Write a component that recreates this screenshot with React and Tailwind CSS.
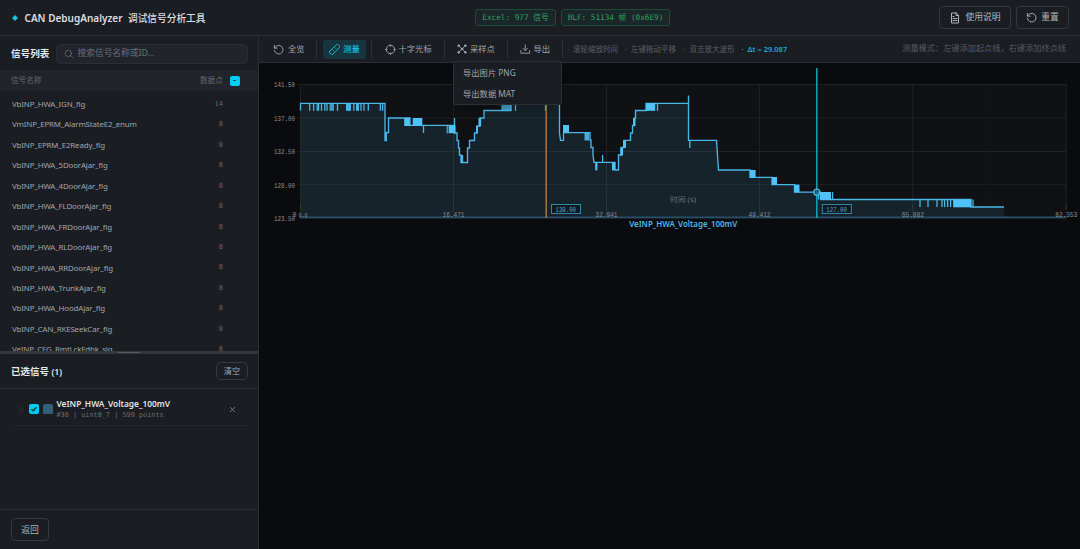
import React from "react";

const signals = [
  ["VbINP_HWA_IGN_flg", 14],
  ["VmINP_EPRM_AlarmStateE2_enum", 8],
  ["VbINP_EPRM_E2Ready_flg", 8],
  ["VbINP_HWA_5DoorAjar_flg", 8],
  ["VbINP_HWA_4DoorAjar_flg", 8],
  ["VbINP_HWA_FLDoorAjar_flg", 8],
  ["VbINP_HWA_FRDoorAjar_flg", 8],
  ["VbINP_HWA_RLDoorAjar_flg", 8],
  ["VbINP_HWA_RRDoorAjar_flg", 8],
  ["VbINP_HWA_TrunkAjar_flg", 8],
  ["VbINP_HWA_HoodAjar_flg", 8],
  ["VbINP_CAN_RKESeekCar_flg", 8],
  ["VeINP_CFG_RmtLckFdbk_sig", 8],
];

const TRACE =
  "M300.5 110.5V103.3H385V140.5H386.3V132.5H388.5V118H410V125.4H446.5V125.4H454.5V118V133H457V140.5H458.5V148H459.5V155H461V162.5H467.5V148H469.5V140.5H474.5V133H477V126H480V118H484V110.5H511V103.3H559.5V133L560.5 140.3H563.5V132.6H590V140H591V147.5H593V155L594 162.4H615V170H618.5V155H621V147.5H624V140.3H630.5V133H632.5V125.5H634.5V118H635.5V110.5H646V103.3H688.5V95.5V140.3H716.5L718.5 170H750V177.3H772V184.6H794.5V192.1H820.5V199.5H971V207H1004";

// dense toggling sections: x, y, width, height, opacity
const BLOCKS = [
  [329.5, 103, 4.5, 7.8, 0.75], [346, 103, 5, 7.8, 0.9], [356, 103, 3, 7.8, 0.9],
  [404.2, 118, 5.6, 8, 1], [412.7, 118, 9.6, 8, 1], [446.5, 126, 2, 7.5, 0.7], [449, 125.4, 6.5, 7.8, 1],
  [461, 155, 2.2, 8, 0.9], [478.5, 118, 2.6, 8, 1], [476, 126, 2, 7, 0.9],
  [501.3, 103, 9.7, 8, 0.75], [563, 125, 6, 7.8, 1], [584.5, 132.5, 4.5, 8, 0.85],
  [595.2, 162.4, 2.2, 8, 1], [612, 162.4, 3, 8, 1], [620.5, 147.5, 2.5, 8, 1], [623, 140.3, 3, 7.6, 1],
  [633, 118, 2.4, 7.6, 1], [646, 103, 9.2, 7.8, 1], [750, 170, 5.6, 7.8, 1],
  [772, 177, 5, 7.8, 1], [794.5, 184.6, 5, 7.8, 1], [820.5, 192, 10.5, 7.8, 1],
  [953.2, 199.5, 17.8, 7.8, 1],
];

// single toggles: x, y1, y2
const TICKS = [
  ...[309.7, 313.6, 317.2, 318.6, 321.5, 324.8, 327, 337.5, 353.8, 361, 364, 368.3, 380.3, 382.6].map((x) => [x, 103, 110.8]),
  [423.5, 125.4, 133], [515.5, 103, 110.8], [545.5, 103, 110.8],
  [602.6, 155, 162.4], [657.5, 103, 110.8], [689.8, 140, 148],
  [818.5, 192, 199.5], [832.6, 192, 199.5],
  ...[920, 928, 937, 942, 944.6, 947.6, 950.6, 973].map((x) => [x, 199.5, 207]),
];

const YL = [["141.50", 84.5], ["137.00", 118], ["132.50", 151.5], ["128.00", 184.7], ["123.50", 218]];
const XL = [["16.471", 453.5], ["32.941", 606.5], ["49.412", 759.5], ["65.882", 912.8], ["82.353", 1066.3]];

function Num({ x, y, w, children, fill = "#8d9095", size = 7.8 }) {
  return (
    <text x={x} y={y} fill={fill} fontSize={size} textLength={w} lengthAdjust="spacingAndGlyphs" fontFamily="'Liberation Mono', monospace">
      {children}
    </text>
  );
}

function Chart() {
  return (
    <svg className="block h-[486px] w-[821px]" viewBox="259 63 821 486">
      <rect x="300" y="84.5" width="766.5" height="133.5" fill="#101114" />
      {YL.map(([t, y]) => (
        <g key={t}>
          <line x1="298" x2="1066.5" y1={y} y2={y} stroke="#1e2125" />
          <Num x={274} y={y + 2.9} w={21}>{t}</Num>
        </g>
      ))}
      <line x1="300.5" x2="300.5" y1="84" y2="218" stroke="#1e2125" />
      <line x1="990.5" x2="990.5" y1="84" y2="218" stroke="#121417" />
      {XL.map(([t, x]) => (
        <line key={t} x1={x} x2={x} y1="84" y2="218" stroke="#1e2125" />
      ))}
      <path d={TRACE + "V218H300.5Z"} fill="#4fc3f7" fillOpacity="0.1" />
      <line x1="300" x2="1066" y1="217.4" y2="217.4" stroke="#29506a" strokeWidth="1.8" />
      {XL.map(([t, x]) => (
        <g key={t}>
          <line x1={x} x2={x} y1="205" y2="209" stroke="#34383e" />
          <Num x={x - 11} y={217.3} w={22}>{t}</Num>
        </g>
      ))}
      <line x1="300.5" x2="300.5" y1="205" y2="209" stroke="#34383e" />
      <Num x={292.5} y={217.3} w={4}>0</Num>
      <Num x={298.5} y={217} w={9} size={5}>0.0</Num>
      <path d={TRACE} fill="none" stroke="#4ab6e7" strokeWidth="1.35" />
      {BLOCKS.map(([x, y, w, h, o], i) => (
        <rect key={i} x={x} y={y} width={w} height={h} fill="#4fc3f7" opacity={o} />
      ))}
      {TICKS.map(([x, a, b], i) => (
        <line key={i} x1={x} x2={x} y1={a} y2={b} stroke="#4ab6e7" strokeWidth="1.3" />
      ))}
      <text x="670" y="202.2" fill="#6c7177" fontSize="7.4" textLength="26" lengthAdjust="spacingAndGlyphs" fontFamily="'Noto Sans', 'Noto Sans CJK SC', sans-serif">时间 (s)</text>
      <line x1="546.2" x2="546.2" y1="63" y2="218" stroke="#bd8044" strokeWidth="1.3" />
      <line x1="816.8" x2="816.8" y1="68" y2="218" stroke="#10adc2" strokeWidth="1.4" />
      <circle cx="816.8" cy="192.2" r="3" fill="#17394a" fillOpacity="0.5" stroke="#45bce2" strokeWidth="1.3" />
      <rect x="551.5" y="204.5" width="29" height="9" fill="#111a20" stroke="#3387a5" />
      <Num x={555.5} y={211.7} w={20.5} fill="#54a9c6">139.00</Num>
      <rect x="822.3" y="204.5" width="29" height="9" fill="#111a20" stroke="#3387a5" />
      <Num x={826.3} y={211.7} w={20.5} fill="#54a9c6">127.00</Num>
      <text x="629.2" y="227" fill="#4fb9e8" fontSize="8.2" fontWeight="600" textLength="108" lengthAdjust="spacingAndGlyphs" fontFamily="'Noto Sans', sans-serif">VeINP_HWA_Voltage_100mV</text>
    </svg>
  );
}

function Icon({ children, className = "size-[12px]" }) {
  return (
    <svg className={className + " shrink-0"} viewBox="0 0 24 24" fill="none" stroke="currentColor" strokeWidth="2" strokeLinecap="round" strokeLinejoin="round">
      {children}
    </svg>
  );
}

const Reset = () => (
  <Icon className="size-[11px]">
    <path d="M3 3v6h6" />
    <path d="M3.5 9A9.5 9.5 0 1 1 3 14" />
  </Icon>
);

const Sep = ({ className = "" }) => <div className={"h-[18px] w-px shrink-0 bg-[#2b3036] " + className} />;

export default function App() {
  return (
    <div className="flex h-[549px] w-[1080px] flex-col overflow-hidden bg-[#0a0b0f] font-['Noto_Sans','Noto_Sans_CJK_SC',sans-serif] text-[8.2px] leading-none whitespace-nowrap text-[#a0a5ad]">
      <header className="flex h-[36px] shrink-0 items-center border-b border-[#2a2e34] bg-[#1a1d22]">
        <div className="flex w-[475px] items-center pt-px pl-[12px]">
          <svg className="size-[6px]" viewBox="0 0 6 6"><path d="M3 0L6 3L3 6L0 3Z" fill="#16c5e4" /></svg>
          <h1 className="ml-[6.5px] text-[9.7px] font-semibold text-[#dcdee2]">
            <span className="inline-block w-[103.5px] text-[10px]">CAN DebugAnalyzer</span>
            <span className="font-medium">调试信号分析工具</span>
          </h1>
        </div>
        <div className="flex gap-[5px] font-['DejaVu_Sans_Mono','Noto_Sans_CJK_SC',monospace] text-[7.7px] text-[#2ca35b]">
          <div className="flex h-[17px] w-[81px] items-center justify-center rounded-[3px] border border-[#1d4b37] bg-[#1b262a]">Excel: 977 信号</div>
          <div className="flex h-[17px] w-[109px] items-center justify-center rounded-[3px] border border-[#1d4b37] bg-[#1b262a]">BLF: 51134 帧 (0x6E9)</div>
        </div>
        <div className="ml-auto flex gap-[5px] pr-[11px] text-[8.8px] text-[#b0b4ba]">
          <button className="flex h-[23px] w-[72px] items-center justify-center gap-[4px] rounded-[4px] border border-[#33373e]">
            <Icon><path d="M14 2H5v20h14V7z" /><path d="M14 2v5h5M8 9h2M8 13h8M8 17h8" /></Icon>使用说明
          </button>
          <button className="flex h-[23px] w-[53px] items-center justify-center gap-[4px] rounded-[4px] border border-[#33373e]">
            <Reset />重置
          </button>
        </div>
      </header>

      <div className="flex min-h-0 flex-1">
        <aside className="flex w-[259px] shrink-0 flex-col border-r border-[#2a2e34] bg-[#1a1d22]">
          <div className="flex h-[34px] shrink-0 items-center pt-px pl-[11px]">
            <h2 className="w-[45px] text-[9.6px] font-bold text-[#e8eaed]">信号列表</h2>
            <div className="flex h-[20px] w-[192px] items-center gap-[4px] rounded-[5px] border border-[#2a2e35] bg-[#21242b] pl-[7px] text-[8.8px] tracking-[-0.08px] text-[#6a6f79]">
              <Icon className="size-[9.5px]"><circle cx="11" cy="11" r="8" /><path d="M17 17l5 5" /></Icon>搜索信号名称或ID...
            </div>
          </div>
          <div className="flex h-[21px] shrink-0 items-center bg-[#21242b] pl-[11px] text-[7.6px] text-[#636872]">
            <span className="w-[189px] pt-px">信号名称</span>
            <span className="pt-px">数据点</span>
            <div className="ml-[7px] flex size-[10px] items-center justify-center rounded-[2px] bg-[#00cdf5]"><div className="h-[1.5px] w-[3px] bg-[#124b5c]" /></div>
          </div>
          <div className="h-[260px] shrink-0 overflow-hidden pt-[3px]">
            {signals.map(([n, c]) => (
              <div key={n} className="flex h-[20.47px] items-center justify-between pr-[35px] pl-[12px] text-[7.9px] tracking-[-0.14px] text-[#a0a5ad]">
                <span className="pt-px">{n}</span>
                <span className="font-['DejaVu_Sans_Mono',monospace] text-[7px] tracking-normal text-[#656a73]">{c}</span>
              </div>
            ))}
          </div>
          <div className="flex h-[3px] shrink-0 justify-center bg-[#34383d]"><div className="my-px h-px w-[22px] bg-[#565a60]" /></div>
          <div className="flex h-[35px] shrink-0 items-center justify-between border-b border-[#2a2e34] pr-[10px] pl-[11px]">
            <h2 className="pt-px text-[9.5px] font-bold text-[#e8eaed]">已选信号 <span className="text-[8.6px] font-semibold">(1)</span></h2>
            <button className="flex h-[18px] w-[32px] items-center justify-center rounded-[5px] border border-[#363a41] text-[8.2px]">清空</button>
          </div>
          <div className="flex-1 pr-[10px] pl-[12px]">
            <div className="flex h-[37px] items-center border-b border-[#22262d] pt-[4px]">
              <svg className="ml-[7px] h-[7px] w-[5px]" viewBox="0 0 5 7" fill="#363b42">
                {[0, 2, 4, 6].map((y) => <g key={y}><rect x="0.5" y={y} width="0.9" height="0.9" /><rect x="3.2" y={y} width="0.9" height="0.9" /></g>)}
              </svg>
              <div className="ml-[5px] flex size-[10px] items-center justify-center rounded-[2px] bg-[#00cdf5]">
                <svg className="size-[8px]" viewBox="0 0 8 8" fill="none" stroke="#17313a" strokeWidth="1.3"><path d="M1.4 4.3L3.1 5.8L6.6 2.2" /></svg>
              </div>
              <div className="ml-[3.5px] size-[10px] rounded-[1.5px] bg-[#325f7a]" />
              <div className="ml-[4px] flex flex-1 flex-col gap-[3px] pt-px">
                <span className="text-[8.35px] font-semibold text-[#e0e3e7]">VeINP_HWA_Voltage_100mV</span>
                <span className="font-['DejaVu_Sans_Mono',monospace] text-[6.85px] text-[#686d76]">#30 | uint8_T | 599 points</span>
              </div>
              <svg className="mr-[13px] size-[5px]" viewBox="0 0 5 5" stroke="#858a93" strokeWidth=".8"><path d="M0 0L5 5M5 0L0 5" /></svg>
            </div>
          </div>
          <div className="flex h-[40px] shrink-0 items-center border-t border-[#2a2e34] pl-[11px]">
            <button className="flex h-[23px] w-[38px] items-center justify-center rounded-[4px] border border-[#363a41] pt-px text-[8.8px] text-[#b0b4ba]">返回</button>
          </div>
        </aside>

        <main className="flex min-w-0 flex-1 flex-col">
          <div className="flex h-[27px] shrink-0 items-center border-b border-[#2a2e34] bg-[#1a1d22] text-[8.3px]">
            <div className="flex w-[57px] items-center gap-[4px] pl-[14px]"><Reset />全览</div>
            <Sep />
            <div className="ml-[6px] flex h-[19px] w-[43px] items-center justify-center gap-[3px] rounded-[3px] bg-[#17353f] font-medium text-[#15bfdd]">
              <Icon className="size-[11px]"><rect x="-1" y="7.500" width="26" height="9" rx="2.500" transform="rotate(-45 12 12)" /><path d="M8 13l2 2M13 8l2 2" strokeWidth="1.500" /></Icon>测量
            </div>
            <Sep className="ml-[5px]" />
            <div className="ml-[12.500px] flex w-[59px] items-center gap-[3px]"><Icon className="size-[11px]"><circle cx="12" cy="12" r="9.300" /><path d="M12 1v4M12 19v4M1 12h4M19 12h4" strokeWidth="1.500" /></Icon>十字光标</div>
            <Sep />
            <div className="ml-[12.500px] flex w-[50px] items-center gap-[3px]">
              <Icon className="size-[10px]"><path d="M5 5l14 14M19 5L5 19" /><g fill="currentColor"><circle cx="4" cy="4" r="2.200" /><circle cx="20" cy="4" r="2.200" /><circle cx="12" cy="12" r="2.200" /><circle cx="4" cy="20" r="2.200" /><circle cx="20" cy="20" r="2.200" /></g></Icon>采样点
            </div>
            <Sep />
            <div className="relative ml-[12px] flex w-[42px] items-center gap-[3px]">
              <Icon className="size-[10.500px]"><path d="M12 2v13M7 10l5 5 5-5M2 15v6h20v-6" /></Icon>导出
              <div className="absolute top-[17.500px] left-[-67px] z-10 flex h-[44px] w-[109px] flex-col justify-around rounded-[2px] border border-[#2b2f35] bg-[#1a1d22] pl-[9px] text-[8.3px] shadow-lg">
                <span>导出图片 PNG</span>
                <span>导出数据 MAT</span>
              </div>
            </div>
            <Sep />
            <div className="flex pt-px text-[7.5px] text-[#5a5f68]">
              <span className="w-[58px] pl-[4px]">·&nbsp; 滚轮缩放时间</span>
              <span className="w-[58.500px] pl-[4px]">·&nbsp; 左键拖动平移</span>
              <span className="w-[58px] pl-[4px]">·&nbsp; 双击放大波形</span>
              <span className="pl-[4px] font-semibold text-[#14b0cb]">·&nbsp; Δt = 29.087</span>
            </div>
            <div className="ml-auto pr-[14px] font-['Liberation_Serif','Noto_Sans_CJK_SC',serif] text-[8.200px] text-[#565b64]">测量模式：左键添加起点线，右键添加终点线</div>
          </div>
          <Chart />
        </main>
      </div>
    </div>
  );
}
